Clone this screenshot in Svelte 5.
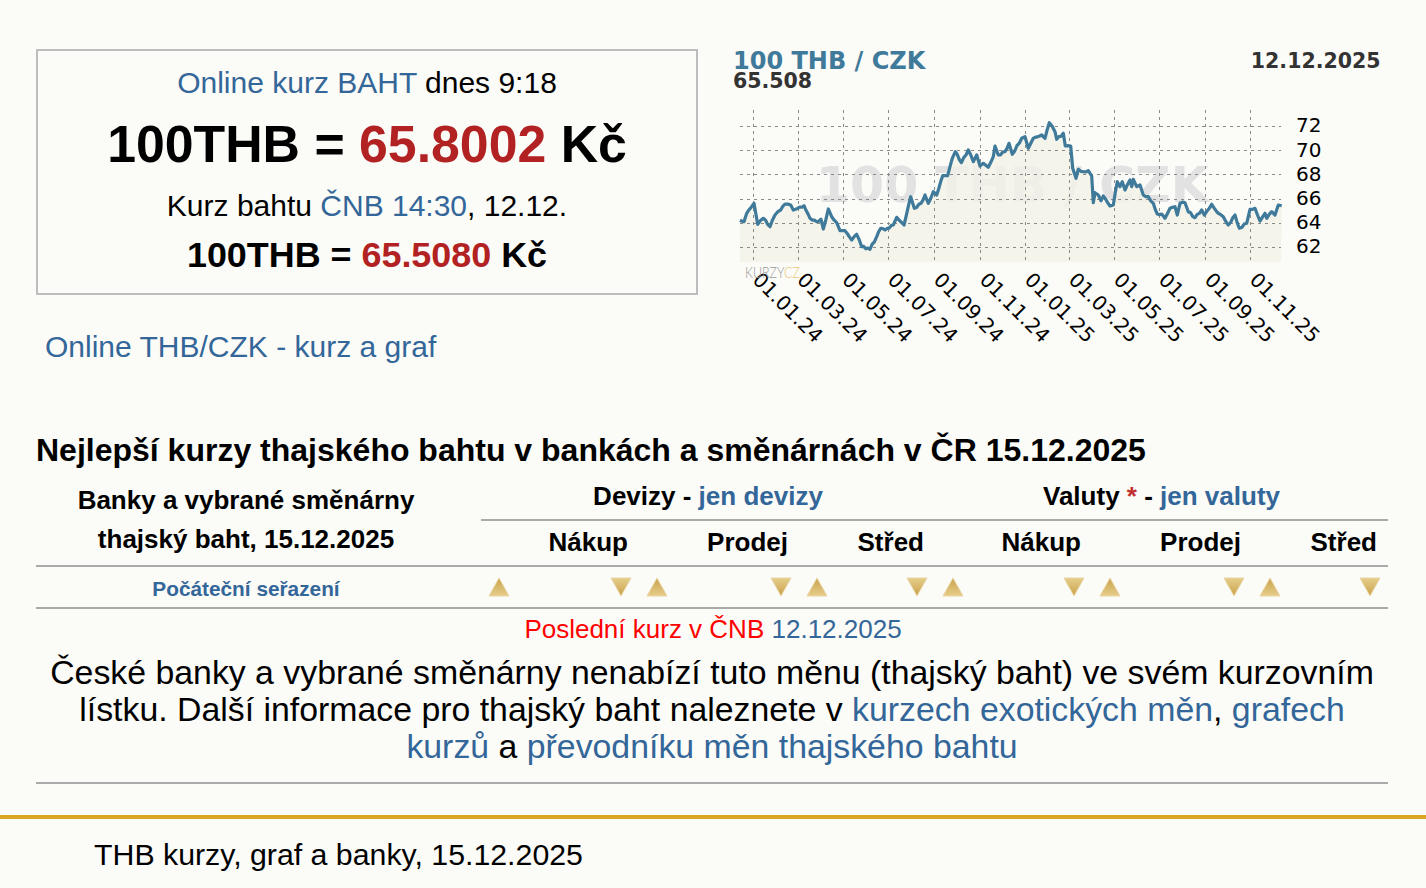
<script>
	// body of the chart: points read off the reference, page coordinates
	const raw1 = [[60,541],[72,545],[80,520],[102,490],[113,553],[130,535],[150,560],[165,525],[182,510],[195,492],[212,495],[220,510],[252,497],[270,535],[290,545],[303,538],[310,567],[325,507],[335,530],[350,548],[360,572],[375,572],[395,600],[410,583],[425,620],[450,628],[470,590],[482,565],[495,570],[520,555],[530,532],[552,555],[572,470],[583,505],[603,490],[615,465],[625,490],[640,455],[650,465],[668,407],[683,407],[697,355],[706,335],[724,368],[745,330],[760,365],[770,345],[780,378],[790,370],[805,382],[820,350],[825,318],[835,345],[855,335],[867,310],[877,343],[905,295],[915,290],[925,325],[940,295],[965,285],[975,295],[988,248],[1005,275],[1010,298]];
	const raw2 = [[70,280],[76,318],[92,318],[98,385],[108,415],[115,388],[130,395],[145,392],[155,408],[160,488],[165,458],[175,465],[183,482],[190,468],[210,498],[220,495],[232,425],[240,440],[247,425],[255,450],[270,420],[275,440],[280,418],[290,440],[300,435],[310,465],[325,470],[340,490],[352,522],[365,522],[375,535],[390,505],[405,500],[412,525],[420,490],[435,488],[445,515],[465,533],[485,510],[493,525],[515,493],[530,515],[550,530],[565,555],[585,525],[598,565],[620,550],[630,508],[645,505],[660,543],[675,520],[680,535],[695,515],[705,525],[715,495],[725,497]];
	const pts = [
		...raw1.map(([x, y]) => [720 + x / 3, 40 + y / 3]),
		...raw2.map(([x, y]) => [1040 + x / 3, 40 + y / 3])
	];

	// daily wobble between the read points
	const wobbly = [];
	pts.forEach(([x, y], i) => {
		wobbly.push([x, y]);
		const next = pts[i + 1];
		if (!next) return;
		const steps = Math.floor((next[0] - x) / 2);
		for (let s = 1; s < steps; s++) {
			const t = s / steps;
			const noise = Math.sin(i * 12.9 + s * 78.2) * 0.9;
			wobbly.push([x + (next[0] - x) * t, y + (next[1] - y) * t + noise]);
		}
	});

	const line = wobbly.map(([x, y]) => `${x.toFixed(1)},${y.toFixed(1)}`).join(' ');
	const area = `740,262 ${line} 1281,262`;

	const yTicks = [
		{ label: '72', y: 126 },
		{ label: '70', y: 150.5 },
		{ label: '68', y: 174.7 },
		{ label: '66', y: 199 },
		{ label: '64', y: 223 },
		{ label: '62', y: 247.3 }
	];
	const xTicks = [
		{ label: '01.01.24', x: 753.5 },
		{ label: '01.03.24', x: 798 },
		{ label: '01.05.24', x: 843 },
		{ label: '01.07.24', x: 888.5 },
		{ label: '01.09.24', x: 934.5 },
		{ label: '01.11.24', x: 980.5 },
		{ label: '01.01.25', x: 1025.5 },
		{ label: '01.03.25', x: 1069.5 },
		{ label: '01.05.25', x: 1114.5 },
		{ label: '01.07.25', x: 1159.5 },
		{ label: '01.09.25', x: 1205.5 },
		{ label: '01.11.25', x: 1250.5 }
	];
	const columns = ['Nákup', 'Prodej', 'Střed', 'Nákup', 'Prodej', 'Střed'];
</script>

{#snippet arrow(up)}
	<svg class="arrow" width="24" height="22" viewBox="0 0 24 22" aria-hidden="true">
		{#if up}
			<polygon points="12,2 22,20 2,20" fill="url(#arrowUp)" stroke="#e9d6a6" stroke-width="1" />
		{:else}
			<polygon points="2,2 22,2 12,20" fill="url(#arrowDown)" stroke="#e9d6a6" stroke-width="1" />
		{/if}
	</svg>
{/snippet}

<svg class="defs" width="0" height="0" aria-hidden="true">
	<defs>
		<linearGradient id="arrowUp" x1="0" y1="0" x2="0" y2="1">
			<stop offset="0" stop-color="#c9a24c" />
			<stop offset="1" stop-color="#e6cd8a" />
		</linearGradient>
		<linearGradient id="arrowDown" x1="0" y1="0" x2="0" y2="1">
			<stop offset="0" stop-color="#e6cd8a" />
			<stop offset="1" stop-color="#c9a24c" />
		</linearGradient>
	</defs>
</svg>

<main class="page">
	<section class="top">
		<div class="left">
			<div class="rate-box">
				<p class="line"><a href="#kurz">Online kurz BAHT</a> dnes 9:18</p>
				<p class="big">100THB = <span class="red">65.8002</span> Kč</p>
				<p class="line second">Kurz bahtu <a href="#cnb">ČNB 14:30</a>, 12.12.</p>
				<p class="mid">100THB = <span class="red">65.5080</span> Kč</p>
			</div>
			<a class="graph-link" href="#graf">Online THB/CZK - kurz a graf</a>
		</div>

		<svg class="chart" width="670" height="320" viewBox="720 40 670 320" role="img" aria-label="Graf kurzu 100 THB / CZK">
			<text x="733" y="69" class="title">100 THB / CZK</text>
			<text x="733" y="87.5" class="sub">65.508</text>
			<text x="1380.5" y="68" text-anchor="end" class="sub">12.12.2025</text>

			<text x="816" y="202" class="mark">100 THB / CZK</text>
			<polygon points={area} fill="#f2f2e8" fill-opacity="0.82" />

			{#each yTicks as t}
				<line x1="740" x2="1281" y1={t.y} y2={t.y} class="grid" />
				<text x="1296" y={t.y + 6} class="tick">{t.label}</text>
			{/each}
			{#each xTicks as t}
				<line x1={t.x} x2={t.x} y1="110" y2="262" class="grid" />
				<text x={t.x - 2} y="281" class="tick" transform="rotate(45 {t.x - 2} 281)">{t.label}</text>
			{/each}

			<polyline points={line} fill="none" stroke="#3f7a9a" stroke-width="3.2" stroke-linejoin="round" />

			<text x="745" y="278" class="logo" textLength="55" lengthAdjust="spacingAndGlyphs">KURZY<tspan fill="#e8c978">CZ</tspan></text>
		</svg>
	</section>

	<h1>Nejlepší kurzy thajského bahtu v bankách a směnárnách v ČR 15.12.2025</h1>

	<table>
		<colgroup>
			<col style="width: 445px" />
			<col style="width: 158px" />
			<col style="width: 160px" />
			<col style="width: 136px" />
			<col style="width: 157px" />
			<col style="width: 160px" />
			<col style="width: 136px" />
		</colgroup>
		<thead>
			<tr class="head-1">
				<th rowspan="2" class="banks">Banky a vybrané směnárny<br />thajský baht, 15.12.2025</th>
				<th colspan="3">Devizy - <a href="#devizy">jen devizy</a></th>
				<th colspan="3">Valuty <span class="star">*</span> - <a href="#valuty">jen valuty</a></th>
			</tr>
			<tr class="head-2">
				{#each columns as name}
					<th>{name}</th>
				{/each}
			</tr>
			<tr class="sort">
				<th class="first"><a href="#sort">Počáteční seřazení</a></th>
				{#each columns as name}
					<th aria-label={name}>
						<div class="arrows">
							{@render arrow(true)}
							{@render arrow(false)}
						</div>
					</th>
				{/each}
			</tr>
		</thead>
	</table>

	<p class="last"><span class="bright">Poslední kurz v ČNB</span> <a href="#cnb">12.12.2025</a></p>

	<p class="note">
		České banky a vybrané směnárny nenabízí tuto měnu (thajský baht) ve svém kurzovním lístku. Další informace pro thajský baht naleznete v <a href="#exoticke">kurzech exotických měn</a>, <a href="#grafy">grafech kurzů</a> a <a href="#prevodnik">převodníku měn thajského bahtu</a>
	</p>

	<footer>THB kurzy, graf a banky, 15.12.2025</footer>
</main>

<style>
	:global(body) {
		margin: 0;
		background: #fbfbf7;
		color: #000;
		font-family: 'Liberation Sans', Arial, sans-serif;
		overflow: hidden;
	}

	a {
		color: #336699;
		text-decoration: none;
	}

	.defs {
		position: absolute;
	}

	.page {
		display: block;
	}

	.top {
		display: flex;
		align-items: flex-start;
		gap: 22px;
		height: 320px;
		padding: 40px 0 0 36px;
	}

	.left {
		width: 662px;
		padding-top: 9px;
	}

	.rate-box {
		box-sizing: border-box;
		height: 246px;
		border: 2px solid #bdbdbd;
		text-align: center;
	}

	.rate-box p {
		margin: 0;
	}

	.line {
		font-size: 30px;
		line-height: 34px;
		padding-top: 15px;
	}

	.big {
		font-size: 51.8px;
		line-height: 60px;
		font-weight: 700;
		padding-top: 14px;
	}

	.second {
		padding-top: 15px;
	}

	.mid {
		font-size: 35.9px;
		line-height: 42px;
		font-weight: 700;
		padding-top: 11px;
	}

	.red {
		color: #b22222;
	}

	.graph-link {
		display: block;
		margin: 34px 0 0 9px;
		font-size: 30px;
		line-height: 36px;
	}

	.chart {
		display: block;
		flex: none;
	}

	.chart text {
		font-family: 'DejaVu Sans', sans-serif;
	}

	.title {
		font-size: 24px;
		font-weight: 700;
		fill: #3f7a9a;
	}

	.sub {
		font-size: 20.5px;
		font-weight: 700;
		fill: #333;
	}

	.mark {
		font-size: 49px;
		font-weight: 700;
		fill: #e2e2e2;
	}

	.grid {
		stroke: #8a8a8a;
		stroke-width: 1;
		stroke-dasharray: 3 4;
		shape-rendering: crispEdges;
	}

	.tick {
		font-size: 20px;
		fill: #000;
	}

	.chart .logo {
		font-family: 'Lato', sans-serif;
		font-weight: 300;
		font-size: 16px;
		fill: #999;
	}

	h1 {
		margin: 0 38px 0 36px;
		padding-top: 70px;
		font-size: 32px;
		line-height: 40px;
		font-weight: 700;
	}

	table {
		width: 1352px;
		margin: 0 0 0 36px;
		table-layout: fixed;
		border-collapse: collapse;
	}

	th {
		padding: 0;
		font-weight: 700;
	}

	.head-1 th {
		box-sizing: border-box;
		height: 50px;
		padding-top: 3px;
		font-size: 26px;
		border-bottom: 2px solid #aaa;
	}

	.head-1 .banks {
		padding: 5px 25px 0 0;
		line-height: 39px;
		border-bottom: none;
	}

	.star {
		color: #c03030;
	}

	.head-2 th {
		box-sizing: border-box;
		height: 46px;
		padding: 0 11px 2px 0;
		font-size: 26px;
		text-align: right;
	}

	.sort th {
		box-sizing: border-box;
		height: 42px;
		font-size: 20.8px;
		border-top: 2px solid #aaa;
		border-bottom: 2px solid #aaa;
	}

	.sort .first {
		padding: 3px 25px 0 0;
	}

	.arrows {
		display: flex;
		justify-content: space-between;
		align-items: center;
		padding: 0 6px;
	}

	.arrow {
		display: block;
	}

	.last {
		margin: 0;
		padding-top: 2px;
		font-size: 26px;
		line-height: 36px;
		text-align: center;
	}

	.bright {
		color: #f00;
	}

	.note {
		margin: 0 38px 0 36px;
		padding: 7px 0 17px;
		font-size: 33.85px;
		line-height: 37px;
		text-align: center;
		border-bottom: 2px solid #aaa;
	}

	footer {
		margin-top: 31px;
		border-top: 4px solid #daa520;
		padding: 16px 0 0 94px;
		font-size: 30.3px;
		line-height: 40px;
	}
</style>
